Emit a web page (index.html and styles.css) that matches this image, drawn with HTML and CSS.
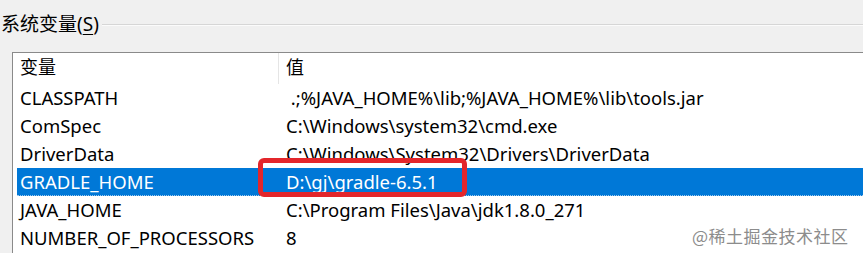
FILE: index.html
```html
<!DOCTYPE html>
<html lang="zh-CN">
<head>
  <meta charset="UTF-8" />
  <title>系统变量</title>
  <link rel="stylesheet" href="styles.css">
</head>
<body>
  <div class="grupo">
    <span class="grupo-titulo">系统变量(<u>S</u>)</span>
    <span class="grupo-linea"></span>
  </div>

  <div class="lista">
    <div class="cabecera">
      <div class="col-nombre">变量</div>
      <div class="col-valor">值</div>
    </div>
    <div class="fila"><div class="col-nombre">CLASSPATH</div><div class="col-valor">&nbsp;.;%JAVA_HOME%\lib;%JAVA_HOME%\lib\tools.jar</div></div>
    <div class="fila"><div class="col-nombre">ComSpec</div><div class="col-valor">C:\Windows\system32\cmd.exe</div></div>
    <div class="fila"><div class="col-nombre">DriverData</div><div class="col-valor">C:\Windows\System32\Drivers\DriverData</div></div>
    <div class="fila seleccionada">
      <div class="col-nombre">GRADLE_HOME</div>
      <div class="col-valor">D:\gj\gradle-6.5.1</div>
      <span class="marca-roja"></span>
    </div>
    <div class="fila"><div class="col-nombre">JAVA_HOME</div><div class="col-valor">C:\Program Files\Java\jdk1.8.0_271</div></div>
    <div class="fila"><div class="col-nombre">NUMBER_OF_PROCESSORS</div><div class="col-valor">8</div></div>
  </div>

  <div class="marca-agua">@稀土掘金技术社区</div>
</body>
</html>
```

FILE: styles.css
```css
* {
  box-sizing: border-box;
  margin: 0;
  padding: 0;
}

body {
  background-color: #f0f0f0;
  color: #000;
  font-family: "Noto Sans", "Noto Sans CJK SC", sans-serif;
  width: 863px;
  height: 253px;
  overflow: hidden;
  position: relative;
}

/* --- titulo del grupo --- */
.grupo {
  display: flex;
  align-items: center;
  height: 50px;
  padding-left: 1px;
}

.grupo-titulo {
  font-size: 19px;
  line-height: 26px;
  white-space: nowrap;
  margin-top: -2px;
}

.grupo-titulo u {
  text-decoration-thickness: 1px;
  text-underline-offset: 3px;
}

.grupo-linea {
  flex: 1;
  height: 2px;
  margin-left: 3px;
  border-top: 1px solid #d6d6d6;
  border-bottom: 1px solid #fbfbfb;
}

/* --- lista de variables --- */
.lista {
  margin-left: 12px;
  margin-top: 2px;
  height: 201px;
  overflow: hidden;
  background: #fff;
  border-left: 1px solid #8a8a8a;
  border-top: 1px solid #8a8a8a;
  padding-left: 4px;
  font-size: 18.5px;
}

.cabecera,
.fila {
  display: grid;
  grid-template-columns: 262px 1fr;
  align-items: center;
  position: relative;
}

.cabecera {
  height: 31px;
  font-size: 18px;
}

.cabecera .col-nombre {
  height: 31px;
  line-height: 29px;
  border-right: 1px solid #e5e5e5;
}

.cabecera .col-valor {
  line-height: 29px;
  height: 31px;
}

.fila {
  height: 28px;
  line-height: 28px;
}

.col-nombre {
  padding-left: 3px;
  white-space: nowrap;
}

.col-valor {
  padding-left: 7px;
  white-space: nowrap;
}

.seleccionada {
  background-color: #0078d7;
  color: #fff;
  border-bottom: 1px dotted #9cc8ee;
}

.marca-roja {
  position: absolute;
  left: 241px;
  top: -10px;
  width: 209px;
  height: 39px;
  border: 5px solid #e3262b;
  border-radius: 6px;
}

/* --- marca de agua --- */
.marca-agua {
  position: absolute;
  left: 692px;
  top: 223px;
  font-family: "Noto Sans CJK SC", sans-serif;
  font-size: 17px;
  color: #8c8c8c;
  letter-spacing: 0.5px;
}
```
